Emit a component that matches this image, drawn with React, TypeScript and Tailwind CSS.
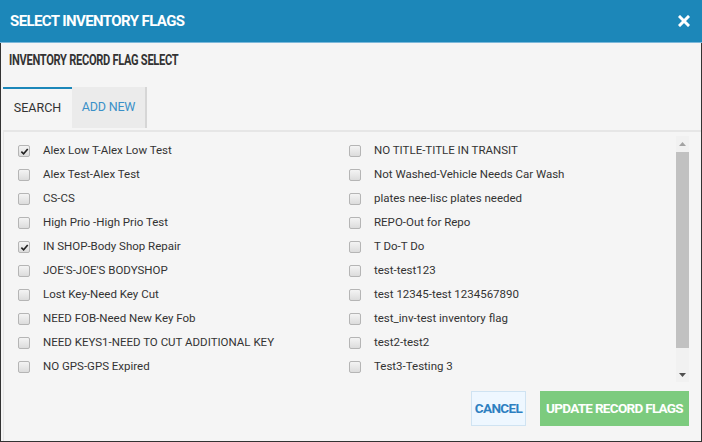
import { useState } from "react";

const LEFT = [
  { label: "Alex Low T-Alex Low Test", on: true },
  { label: "Alex Test-Alex Test", on: false },
  { label: "CS-CS", on: false },
  { label: "High Prio -High Prio Test", on: false },
  { label: "IN SHOP-Body Shop Repair", on: true },
  { label: "JOE'S-JOE'S BODYSHOP", on: false },
  { label: "Lost Key-Need Key Cut", on: false },
  { label: "NEED FOB-Need New Key Fob", on: false },
  { label: "NEED KEYS1-NEED TO CUT ADDITIONAL KEY", on: false },
  { label: "NO GPS-GPS Expired", on: false },
];

const RIGHT = [
  { label: "NO TITLE-TITLE IN TRANSIT", on: false },
  { label: "Not Washed-Vehicle Needs Car Wash", on: false },
  { label: "plates nee-lisc plates needed", on: false },
  { label: "REPO-Out for Repo", on: false },
  { label: "T Do-T Do", on: false },
  { label: "test-test123", on: false },
  { label: "test 12345-test 1234567890", on: false },
  { label: "test_inv-test inventory flag", on: false },
  { label: "test2-test2", on: false },
  { label: "Test3-Testing 3", on: false },
];

function Check({ on }: { on: boolean }) {
  return (
    <span className="w-[12px] h-[12px] rounded-[2px] border border-[#b5b5b5] bg-gradient-to-b from-[#f4f4f4] to-[#dcdcdc] flex items-center justify-center shrink-0">
      {on && (
        <svg width="9" height="9" viewBox="0 0 10 10">
          <path d="M1.5 5.2 L4 7.6 L8.6 2.2" fill="none" stroke="#222" strokeWidth="1.8" />
        </svg>
      )}
    </span>
  );
}

function FlagRow({ label, on }: { label: string; on: boolean }) {
  const [checked, setChecked] = useState(on);
  return (
    <div className="h-[24px] flex items-center cursor-pointer" onClick={() => setChecked(!checked)}>
      <Check on={checked} />
      <span className="ml-[13px] text-[11.5px] text-[#333] whitespace-nowrap">{label}</span>
    </div>
  );
}

export default function App() {
  return (
    <div className="w-[702px] h-[442px] flex flex-col bg-[#f5f5f5] font-['Roboto',sans-serif]">
      {/* Header */}
      <div className="h-[43px] bg-[#1c87b9] border-b border-[#7cb8da] flex items-center justify-between pl-[10px] pr-[12px] shrink-0">
        <span className="text-white font-bold text-[15px] tracking-[-0.6px]">SELECT INVENTORY FLAGS</span>
        <svg width="12" height="12" viewBox="0 0 12 12">
          <path d="M2 2 L10 10 M10 2 L2 10" stroke="#fff" strokeWidth="3" strokeLinecap="square" />
        </svg>
      </div>

      <div className="flex-1 flex flex-col border-x border-b border-[#333] min-h-0">
        <div className="pt-[5px] pl-[8px] h-[30px]">
          <span className="inline-block whitespace-nowrap text-[15px] font-bold text-[#333] tracking-[-0.4px] scale-x-[0.74] origin-left">
            INVENTORY RECORD FLAG SELECT
          </span>
        </div>

        {/* Tabs */}
        <div className="mt-[14px] ml-[2px] flex h-[41px]">
          <div className="w-[69px] border-t-2 border-[#1c87b9] flex items-center justify-center text-[12.5px] text-[#333]">
            SEARCH
          </div>
          <div className="w-[75px] bg-[#ebebeb] border-r-2 border-[#d6d6d6] flex items-center justify-center text-[12.5px] text-[#3a90c8] tracking-[-0.2px]">
            ADD NEW
          </div>
        </div>

        {/* Panel */}
        <div className="mt-[2px] ml-[2px] flex-1 border-t-2 border-l border-[#e6e6e6] flex flex-col">
          <div className="flex h-[251px] pt-[4px]">
            <div className="flex-1 flex pl-[14px] pt-[3px]">
              <div className="w-[331px] flex flex-col">
                {LEFT.map((f) => (
                  <FlagRow key={f.label} {...f} />
                ))}
              </div>
              <div className="flex flex-col">
                {RIGHT.map((f) => (
                  <FlagRow key={f.label} {...f} />
                ))}
              </div>
            </div>
            {/* scrollbar */}
            <div className="w-[13px] mr-[12px] bg-[#f1f1f1] flex flex-col items-center h-[246px]">
              <div className="h-[16px] flex items-center justify-center">
                <svg width="7" height="4" viewBox="0 0 7 4">
                  <path d="M0 4 L3.5 0 L7 4 Z" fill="#a3a3a3" />
                </svg>
              </div>
              <div className="w-full h-[196px] bg-[#c1c1c1]" />
              <div className="flex-1 flex items-end justify-center pb-[5px]">
                <svg width="7" height="4" viewBox="0 0 7 4">
                  <path d="M0 0 L7 0 L3.5 4 Z" fill="#505050" />
                </svg>
              </div>
            </div>
          </div>

          {/* Footer buttons */}
          <div className="flex justify-end gap-[14px] pr-[12px] pt-[8px]">
            <button className="w-[55px] h-[35px] bg-[#eef7ff] border border-[#cfe3f2] text-[#2d7fc1] text-[13.5px] font-bold tracking-[-0.6px]">
              CANCEL
            </button>
            <button className="w-[149px] h-[35px] bg-[#7ccb7e] text-white text-[13.5px] font-bold tracking-[-0.7px]">
              UPDATE RECORD FLAGS
            </button>
          </div>
        </div>
      </div>
    </div>
  );
}
